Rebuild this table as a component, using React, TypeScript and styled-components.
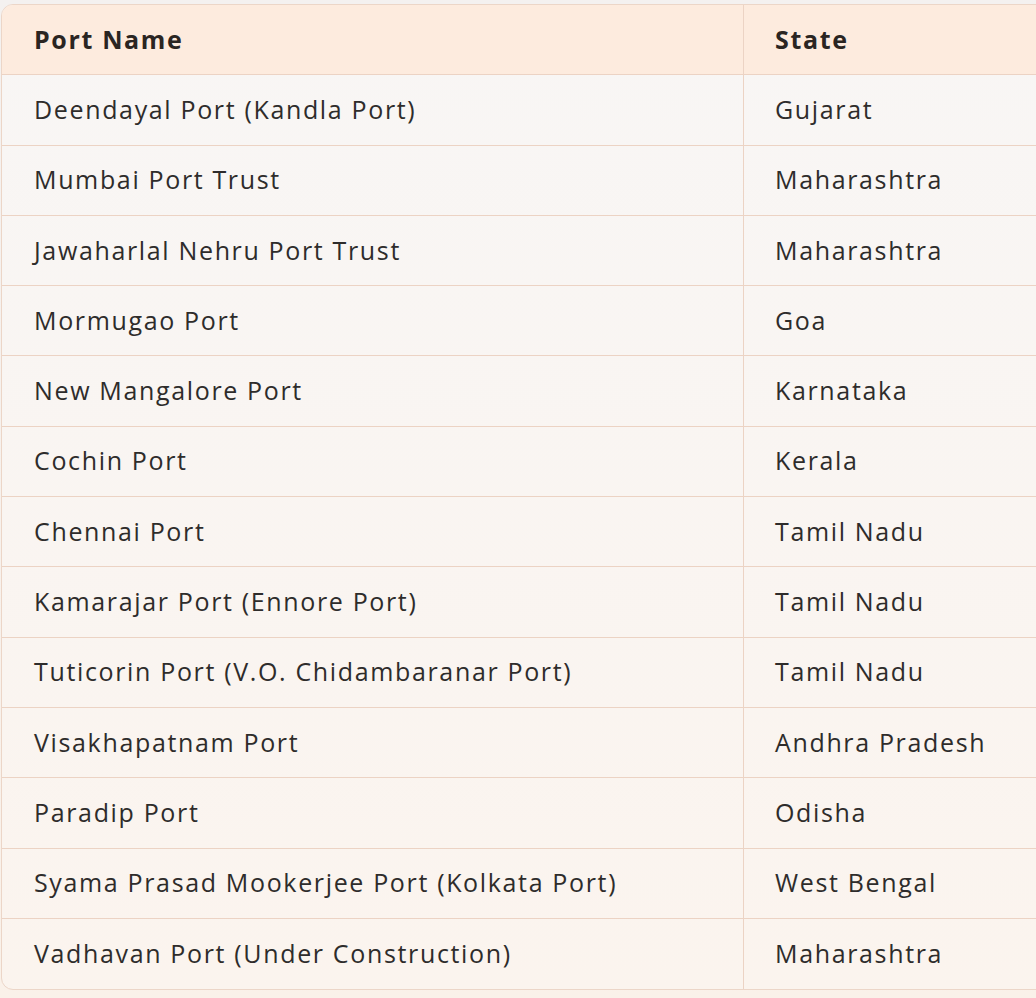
import React from "react";
import styled, { createGlobalStyle } from "styled-components";

const Global = createGlobalStyle`
  html, body { margin: 0; padding: 0; }
  body {
    background: linear-gradient(#f4f1f0, #faf1e9);
    overflow: hidden;
    font-family: "Open Sans", "Noto Sans", sans-serif;
  }
`;

const Page = styled.div`
  width: 1036px;
  height: 998px;
  overflow: hidden;
  padding: 4px 0 0 1px;
  box-sizing: border-box;
`;

const Table = styled.div`
  width: 1100px;
  display: grid;
  grid-template-columns: 742px 1fr;
  border: 1.5px solid #ecd6c8;
  border-radius: 12px;
  overflow: hidden;
  background: linear-gradient(#f8f6f5, #fbf4ee);
`;

const Cell = styled.div<{ $head?: boolean; $last?: boolean; $first?: boolean }>`
  height: 70.3px;
  box-sizing: border-box;
  display: flex;
  align-items: center;
  padding-left: ${(p) => (p.$first ? "32px" : "31px")};
  padding-bottom: 2px;
  font-size: 25px;
  letter-spacing: 1.65px;
  color: ${(p) => (p.$head ? "#2a2522" : "#2e2c2b")};
  font-weight: ${(p) => (p.$head ? 700 : 400)};
  background: ${(p) => (p.$head ? "#fdebde" : "transparent")};
  border-bottom: ${(p) => (p.$last ? "none" : "1.5px solid #ecd3c4")};
  border-right: ${(p) => (p.$first ? "1.5px solid #ecd3c4" : "none")};
`;

const rows: [string, string][] = [
  ["Deendayal Port (Kandla Port)", "Gujarat"],
  ["Mumbai Port Trust", "Maharashtra"],
  ["Jawaharlal Nehru Port Trust", "Maharashtra"],
  ["Mormugao Port", "Goa"],
  ["New Mangalore Port", "Karnataka"],
  ["Cochin Port", "Kerala"],
  ["Chennai Port", "Tamil Nadu"],
  ["Kamarajar Port (Ennore Port)", "Tamil Nadu"],
  ["Tuticorin Port (V.O. Chidambaranar Port)", "Tamil Nadu"],
  ["Visakhapatnam Port", "Andhra Pradesh"],
  ["Paradip Port", "Odisha"],
  ["Syama Prasad Mookerjee Port (Kolkata Port)", "West Bengal"],
  ["Vadhavan Port (Under Construction)", "Maharashtra"],
];

export default function App() {
  return (
    <Page>
      <Global />
      <Table>
        <Cell $head $first>Port Name</Cell>
        <Cell $head>State</Cell>
        {rows.map(([a, b], i) => {
          const last = i === rows.length - 1;
          return (
            <React.Fragment key={a}>
              <Cell $first $last={last}>{a}</Cell>
              <Cell $last={last}>{b}</Cell>
            </React.Fragment>
          );
        })}
      </Table>
    </Page>
  );
}
